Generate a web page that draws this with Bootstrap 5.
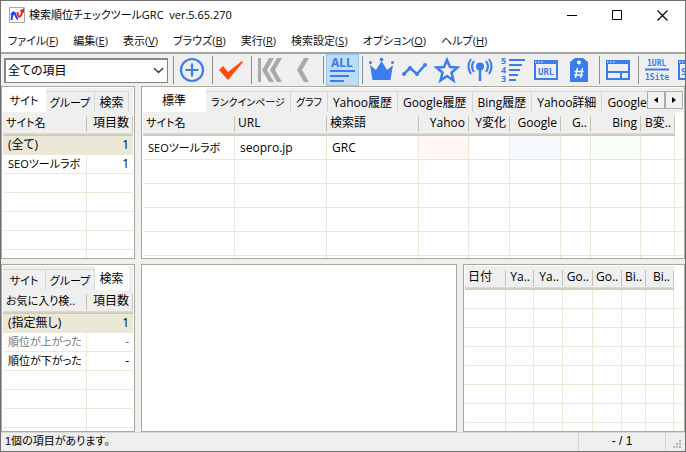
<!DOCTYPE html>
<html lang="ja">
<head>
<meta charset="utf-8">
<meta name="viewport" content="width=device-width, initial-scale=1">
<title>検索順位チェックツールGRC</title>
<link rel="stylesheet" href="https://cdn.jsdelivr.net/npm/bootstrap@5.3.0/dist/css/bootstrap.min.css">
<style>
:root{--face:#efefef;--edge:#a9a899;--grid:#ebe8d8;--blue:#3b7ded}
body{font-family:"Open Sans","Noto Sans CJK JP",sans-serif;font-size:12px;line-height:16px;color:#000;font-feature-settings:"palt"}
button,select{font:inherit;font-feature-settings:inherit;color:inherit}
button{border:0;background:none;padding:0}
.kana-text,.tab-strip .kana-text{font-size:11px}
.tab-strip .kana-dense{font-size:10px}
.app-window{min-height:100vh;height:100vh;border:1px solid #6f6f6f;background:var(--face)}
.title-bar{height:28px}
.title-bar .caption{white-space:pre}
.win-btn{width:45px;height:28px}
.menu-strip{height:23px;padding-left:7px;gap:15px;color:#111}
.tool-strip{height:34px;border-top:2px solid #a5a5a5;padding-left:3px}
.item-select{width:164px;height:25px;flex:none;margin-right:2px;border:2px solid #858585;border-right-width:1px;border-bottom-width:1px;border-radius:0;background-color:#fff;background-position:right 3px center;background-size:11px;padding:0 18px 0 2px;font-size:12px;line-height:20px;color:#000}
.tool-sep{width:6px;height:28px;flex:none;background:linear-gradient(#8d8d8d,#8d8d8d) 3px 0/1px 100% no-repeat}
.tool-btn{width:33px;height:32px;flex:none;padding:0}
.tool-btn svg{display:block}
.tool-btn.active{background:#c0dcf3;box-shadow:inset 0 0 0 1px #90c8f6}
.tool-btn text{font-weight:700;fill:var(--blue);font-family:"Noto Sans",sans-serif}
.tool-btn .mono{font-family:"DejaVu Sans Mono",monospace}
.work-area{display:grid;grid-template-columns:134px minmax(0,1fr) 222px;grid-template-rows:minmax(0,174fr) minmax(0,168fr);gap:5px 6px;min-height:0}
.pane{background:#fff;border:1px solid var(--edge);padding:1px;min-width:0;min-height:0}
.pane-wide{grid-column:2/4}
.tab-strip{height:24px;background:var(--face);border:0;flex:none;flex-wrap:nowrap;align-items:flex-end}
.tab-scroller{min-width:0}
.tab-strip .tab-btn{height:21px;padding:0 5px;border-right:1px solid #d6d6d6;border-top:1px solid #d6d6d6;white-space:nowrap;flex:none;text-align:center;line-height:19px}
.tab-strip .tab-btn.active{height:24px;background:#fff;border-color:#fff;line-height:20px}
.tab-short{width:34px}.tab-mid{width:43px}.tab-long{width:49px}.tab-lead{width:63px}
.tab-strip .tab-short,.tab-strip .tab-mid,.tab-strip .tab-long{padding:0}
.scroll-btn{width:18px;height:18px;flex:none;border:1px solid #adadad;background:#f2f2f2}
.grid-list{table-layout:fixed;width:100%;border-collapse:separate;border-spacing:0}
.grid-list th,.grid-list td{white-space:nowrap;overflow:hidden;padding:0 4px 0 5px;border-right:1px solid var(--grid);border-bottom:1px solid var(--grid);height:19px;line-height:18px}
.grid-list th{height:24px;font-weight:400;line-height:21px;padding:0 4px 3px 3px;border:0;
 background:linear-gradient(#c6c3b2,#c6c3b2) right 0 top 4px/1px 16px no-repeat,linear-gradient(#e0ddcf,#c8c4b2) left 0 bottom 0/100% 3px no-repeat,var(--face)}
.grid-list tr>:last-child{border-right:0}
.grid-list th.blank{background:#fff}
.grid-list.tall td{height:24px;line-height:22px}
.chosen td{background:#ebe8d8}
.faded{color:#777}
.c-41{width:41px}.c-24{width:24px}.c-28{width:28px}.c-29{width:29px}.c-30{width:30px}.c-34{width:34px}.c-50{width:50px}.c-51{width:51px}.c-92{width:92px}.c-84{width:84px}.c-46{width:46px}
.tint-y{background:#fff8f5}.tint-g{background:#f6faff}.tint-b{background:#f7fff8}
.status-strip{height:19px;border-top:1px solid #d9d9d9;font-family:"Liberation Sans","Noto Sans CJK JP",sans-serif}
.status-count{width:88px;border:solid #d4d4d4;border-width:0 1px}
.status-end{width:19px}
</style>
<script src="https://cdn.jsdelivr.net/npm/bootstrap@5.3.0/dist/js/bootstrap.bundle.min.js"></script>
</head>
<body>
<div class="app-window d-flex flex-column overflow-hidden">
 <header class="title-bar d-flex align-items-center bg-white flex-shrink-0 ps-2">
  <svg width="16" height="16" viewBox="0 0 16 16" aria-hidden="true"><path d="M.5.5h15v15H.5z" fill="#fff" stroke="#aaa"/><path d="M2.500 13C3.500 6 4.500 4 6 7s1.500 5 3 5" fill="none" stroke="#1c3df0" stroke-width="2"/><path d="M8.500 5c0 4 1.500 6 3 4s1.500-3 2-6" fill="none" stroke="#f02030" stroke-width="2"/><path d="M1 8l3-4 3 3z" fill="#1c3df0"/><path d="M10.500 4l4.500-3v5z" fill="#f02030"/></svg>
  <span class="caption kana-text ms-1 flex-grow-1 text-truncate">検索順位チェックツールGRC  ver.5.65.270</span>
  <button class="win-btn" aria-label="最小化"><svg width="11" height="11" class="d-block mx-auto"><path d="M0 5.500h10" stroke="#000"/></svg></button>
  <button class="win-btn" aria-label="最大化"><svg width="11" height="11" class="d-block mx-auto"><path d="M.5.5h9v9h-9z" fill="none" stroke="#000"/></svg></button>
  <button class="win-btn" aria-label="閉じる"><svg width="11" height="11" class="d-block mx-auto"><path d="M.5.5l10 10M10.500.5l-10 10" stroke="#000" stroke-width="1.100"/></svg></button>
 </header>
 <nav class="menu-strip kana-text d-flex align-items-center bg-white flex-shrink-0 text-nowrap" aria-label="メニュー">
  <button>ファイル(<u>F</u>)</button><button>編集(<u>E</u>)</button><button>表示(<u>V</u>)</button><button>ブラウズ(<u>B</u>)</button><button>実行(<u>R</u>)</button><button>検索設定(<u>S</u>)</button><button>オプション(<u>O</u>)</button><button>ヘルプ(<u>H</u>)</button>
 </nav>
 <div class="tool-strip d-flex align-items-center flex-shrink-0 overflow-hidden" role="toolbar" aria-label="ツールバー">
  <select class="form-select item-select" aria-label="表示項目"><option>全ての項目</option></select>
  <span class="tool-sep"></span>
  <button class="tool-btn" aria-label="追加"><svg width="33" height="32"><circle cx="16" cy="16" r="11" fill="none" stroke="#3b7ded" stroke-width="2.200"/><path d="M9.500 16h13M16 9.500v13" stroke="#3b7ded" stroke-width="2.200"/></svg></button>
  <span class="tool-sep"></span>
  <button class="tool-btn" aria-label="チェック"><svg width="33" height="32"><path d="M4 16l4-4 5 6L27 7l1 1-15 18z" fill="#ff4a0c"/></svg></button>
  <span class="tool-sep"></span>
  <button class="tool-btn" aria-label="最初へ"><svg width="33" height="32" fill="#a9a9a9"><path d="M4 4h3v24H4zM15 4h5l-7 12 7 12h-5L8 16zM23 4h5l-7 12 7 12h-5l-7-12z"/></svg></button>
  <button class="tool-btn" aria-label="前へ"><svg width="33" height="32"><path d="M17 4h5l-7 12 7 12h-5l-7-12z" fill="#a9a9a9"/></svg></button>
  <span class="tool-sep"></span>
  <button class="tool-btn active" aria-label="全て表示" aria-pressed="true"><svg width="33" height="32"><text x="5" y="13" font-size="12">ALL</text><path d="M4 17h25M4 22h19M4 27h14" stroke="#3b7ded" stroke-width="2"/></svg></button>
  <span class="tool-sep"></span>
  <button class="tool-btn" aria-label="ランキング"><svg width="33" height="32" fill="#3b7ded"><path d="M5 11l6 5 5.500-9L22 16l6-5-2.500 15h-18z"/><circle cx="5.500" cy="8.500" r="1.500"/><circle cx="16.500" cy="5.500" r="1.800"/><circle cx="27.500" cy="8.500" r="1.500"/></svg></button>
  <button class="tool-btn" aria-label="グラフ"><svg width="33" height="32"><path d="M6 20l6-6 7 6 8-9" fill="none" stroke="#3b7ded" stroke-width="2.500"/><g fill="#3b7ded"><circle cx="6" cy="20" r="2"/><circle cx="12" cy="14" r="2"/><circle cx="19" cy="20" r="2"/><circle cx="27" cy="11" r="2"/></g></svg></button>
  <button class="tool-btn" aria-label="お気に入り"><svg width="33" height="32"><path d="M16 6l3 7 7.500.5-6 5 2 8-6.500-4.500-6.500 4.500 2-8-6-5L13 13z" fill="none" stroke="#3b7ded" stroke-width="2.500"/></svg></button>
  <button class="tool-btn" aria-label="発信"><svg width="33" height="32"><circle cx="16" cy="12.500" r="4" fill="#3b7ded"/><path d="M16 13v14" stroke="#3b7ded" stroke-width="2.500"/><path d="M10 7q-4 5.500 0 11M22 7q4 5.500 0 11M7 5q-5 7.500 0 15M25 5q5 7.500 0 15" fill="none" stroke="#3b7ded" stroke-width="2"/></svg></button>
  <button class="tool-btn" aria-label="順位"><svg width="33" height="32"><g font-size="9"><text x="4" y="10">5</text><text x="4" y="19">4</text><text x="4" y="28">3</text></g><path d="M12 6h16M12 11h13M12 16h11M12 21h9M12 26h7" stroke="#3b7ded" stroke-width="2"/></svg></button>
  <button class="tool-btn" aria-label="URL"><svg width="33" height="32"><path d="M4 6h24v20H4z" fill="#3b7ded"/><path d="M6 10h20v14H6z" fill="#efefef"/><path d="M5 8h1.500M8 8h1.500M11 8h1.500" stroke="#fff"/><text class="mono" x="8" y="21" font-size="9">URL</text></svg></button>
  <button class="tool-btn" aria-label="タグ"><svg width="33" height="32"><path d="M7 8l5-4h8l5 4v20H7z" fill="#3b7ded"/><circle cx="16" cy="8.500" r="2" fill="#fff"/><path d="M14.500 14l-2 10M19.500 14l-2 10M11.500 17.500h9M11 21h9" stroke="#fff" stroke-width="1.400"/></svg></button>
  <span class="tool-sep"></span>
  <button class="tool-btn" aria-label="画面分割"><svg width="33" height="32"><path d="M4 6h24v20H4z" fill="#3b7ded"/><path d="M6 10h20v7H6zM6 19h12v5H6zM20 19h6v5h-6z" fill="#efefef"/><path d="M5 8h1.500M8 8h1.500M11 8h1.500" stroke="#fff"/></svg></button>
  <span class="tool-sep"></span>
  <button class="tool-btn" aria-label="1URL 1Site"><svg width="33" height="32"><text class="mono" x="6" y="12" font-size="8">1URL</text><path d="M4 15.500h24" stroke="#3b7ded" stroke-width="2"/><text class="mono" x="4" y="26" font-size="8">1Site</text></svg></button>
  <button class="tool-btn" aria-label="サイト"><svg width="33" height="32"><path d="M4 6h24v20H4z" fill="#3b7ded"/><path d="M6 10h20v14H6z" fill="#efefef"/><path d="M5 8h1.500M8 8h1.500" stroke="#fff"/><text class="mono" x="7" y="21" font-size="9">S</text></svg></button>
 </div>
 <main class="work-area flex-grow-1">
  <section class="pane d-flex flex-column overflow-hidden">
   <div class="tab-strip nav" role="tablist"><button class="tab-btn tab-mid kana-text active" role="tab" aria-selected="true">サイト</button><button class="tab-btn tab-long kana-text" role="tab">グループ</button><button class="tab-btn tab-short" role="tab">検索</button></div>
   <table class="grid-list">
    <colgroup><col class="c-84"><col class="c-46"></colgroup>
    <thead><tr><th class="kana-text">サイト名</th><th class="text-end">項目数</th></tr></thead>
    <tbody><tr class="chosen"><td>(全て)</td><td class="text-end">1</td></tr><tr><td class="kana-text">SEOツールラボ</td><td class="text-end">1</td></tr><tr><td></td><td></td></tr><tr><td></td><td></td></tr><tr><td></td><td></td></tr><tr><td></td><td></td></tr><tr><td></td><td></td></tr></tbody>
   </table>
  </section>
  <section class="pane pane-wide d-flex flex-column overflow-hidden">
   <div class="tab-strip nav" role="tablist">
    <div class="tab-scroller d-flex align-items-end flex-grow-1 overflow-hidden"><button class="tab-btn tab-lead active" role="tab" aria-selected="true">標準</button><button class="tab-btn kana-dense" role="tab">ランクインページ</button><button class="tab-btn kana-dense" role="tab">グラフ</button><button class="tab-btn" role="tab">Yahoo履歴</button><button class="tab-btn" role="tab">Google履歴</button><button class="tab-btn" role="tab">Bing履歴</button><button class="tab-btn" role="tab">Yahoo詳細</button><button class="tab-btn" role="tab">Google詳細</button></div>
    <div class="d-flex align-self-center"><button class="scroll-btn" aria-label="左へ"><svg width="8" height="8" class="d-block mx-auto"><path d="M6 1v6L2 4z"/></svg></button><button class="scroll-btn" aria-label="右へ"><svg width="8" height="8" class="d-block mx-auto"><path d="M2 1v6l4-3z"/></svg></button></div>
   </div>
   <table class="grid-list tall">
    <colgroup><col class="c-92"><col class="c-92"><col class="c-92"><col class="c-50"><col class="c-41"><col class="c-51"><col class="c-30"><col class="c-50"><col class="c-34"><col></colgroup>
    <thead><tr><th class="kana-text">サイト名</th><th>URL</th><th>検索語</th><th class="text-end">Yahoo</th><th class="text-end">Y変化</th><th class="text-end">Google</th><th class="text-end">G..</th><th class="text-end">Bing</th><th class="text-end">B変..</th><th class="blank"></th></tr></thead>
    <tbody>
     <tr><td class="kana-text">SEOツールラボ</td><td>seopro.jp</td><td>GRC</td><td class="tint-y"></td><td></td><td class="tint-g"></td><td></td><td class="tint-b"></td><td></td><td></td></tr>
     <tr><td></td><td></td><td></td><td></td><td></td><td></td><td></td><td></td><td></td><td></td></tr>
     <tr><td></td><td></td><td></td><td></td><td></td><td></td><td></td><td></td><td></td><td></td></tr>
     <tr><td></td><td></td><td></td><td></td><td></td><td></td><td></td><td></td><td></td><td></td></tr>
     <tr><td></td><td></td><td></td><td></td><td></td><td></td><td></td><td></td><td></td><td></td></tr>
     <tr><td></td><td></td><td></td><td></td><td></td><td></td><td></td><td></td><td></td><td></td></tr>
    </tbody>
   </table>
  </section>
  <section class="pane d-flex flex-column overflow-hidden">
   <div class="tab-strip nav" role="tablist"><button class="tab-btn tab-mid kana-text" role="tab">サイト</button><button class="tab-btn tab-long kana-text" role="tab">グループ</button><button class="tab-btn tab-short active" role="tab" aria-selected="true">検索</button></div>
   <table class="grid-list">
    <colgroup><col class="c-84"><col class="c-46"></colgroup>
    <thead><tr><th class="kana-text">お気に入り検..</th><th class="text-end">項目数</th></tr></thead>
    <tbody><tr class="chosen"><td>(指定無し)</td><td class="text-end">1</td></tr><tr class="faded"><td class="kana-text">順位が上がった</td><td class="text-end">-</td></tr><tr><td class="kana-text">順位が下がった</td><td class="text-end">-</td></tr><tr><td></td><td></td></tr><tr><td></td><td></td></tr><tr><td></td><td></td></tr><tr><td></td><td></td></tr></tbody>
   </table>
  </section>
  <section class="pane" aria-label="グラフ"></section>
  <section class="pane d-flex flex-column overflow-hidden">
   <table class="grid-list">
    <colgroup><col class="c-41"><col class="c-28"><col class="c-29"><col class="c-30"><col class="c-29"><col class="c-24"><col class="c-28"><col></colgroup>
    <thead><tr><th>日付</th><th class="text-end">Ya..</th><th class="text-end">Ya..</th><th class="text-end">Go..</th><th class="text-end">Go..</th><th class="text-end">Bi..</th><th class="text-end">Bi..</th><th class="blank"></th></tr></thead>
    <tbody>
     <tr><td></td><td></td><td></td><td></td><td></td><td></td><td></td><td></td></tr><tr><td></td><td></td><td></td><td></td><td></td><td></td><td></td><td></td></tr>
     <tr><td></td><td></td><td></td><td></td><td></td><td></td><td></td><td></td></tr><tr><td></td><td></td><td></td><td></td><td></td><td></td><td></td><td></td></tr>
     <tr><td></td><td></td><td></td><td></td><td></td><td></td><td></td><td></td></tr><tr><td></td><td></td><td></td><td></td><td></td><td></td><td></td><td></td></tr>
     <tr><td></td><td></td><td></td><td></td><td></td><td></td><td></td><td></td></tr><tr><td></td><td></td><td></td><td></td><td></td><td></td><td></td><td></td></tr>
    </tbody>
   </table>
  </section>
 </main>
 <footer class="status-strip d-flex flex-shrink-0">
  <span class="kana-text flex-grow-1 ps-1">1個の項目があります。</span>
  <span class="status-count text-center">- / 1</span>
  <span class="status-end d-flex align-items-end justify-content-end pe-1"><svg width="9" height="13" fill="#b5b5b5"><path d="M7 2h2v2H7zM4 5h2v2H4zM7 5h2v2H7zM1 8h2v2H1zM4 8h2v2H4zM7 8h2v2H7z"/></svg></span>
 </footer>
</div>
</body>
</html>
